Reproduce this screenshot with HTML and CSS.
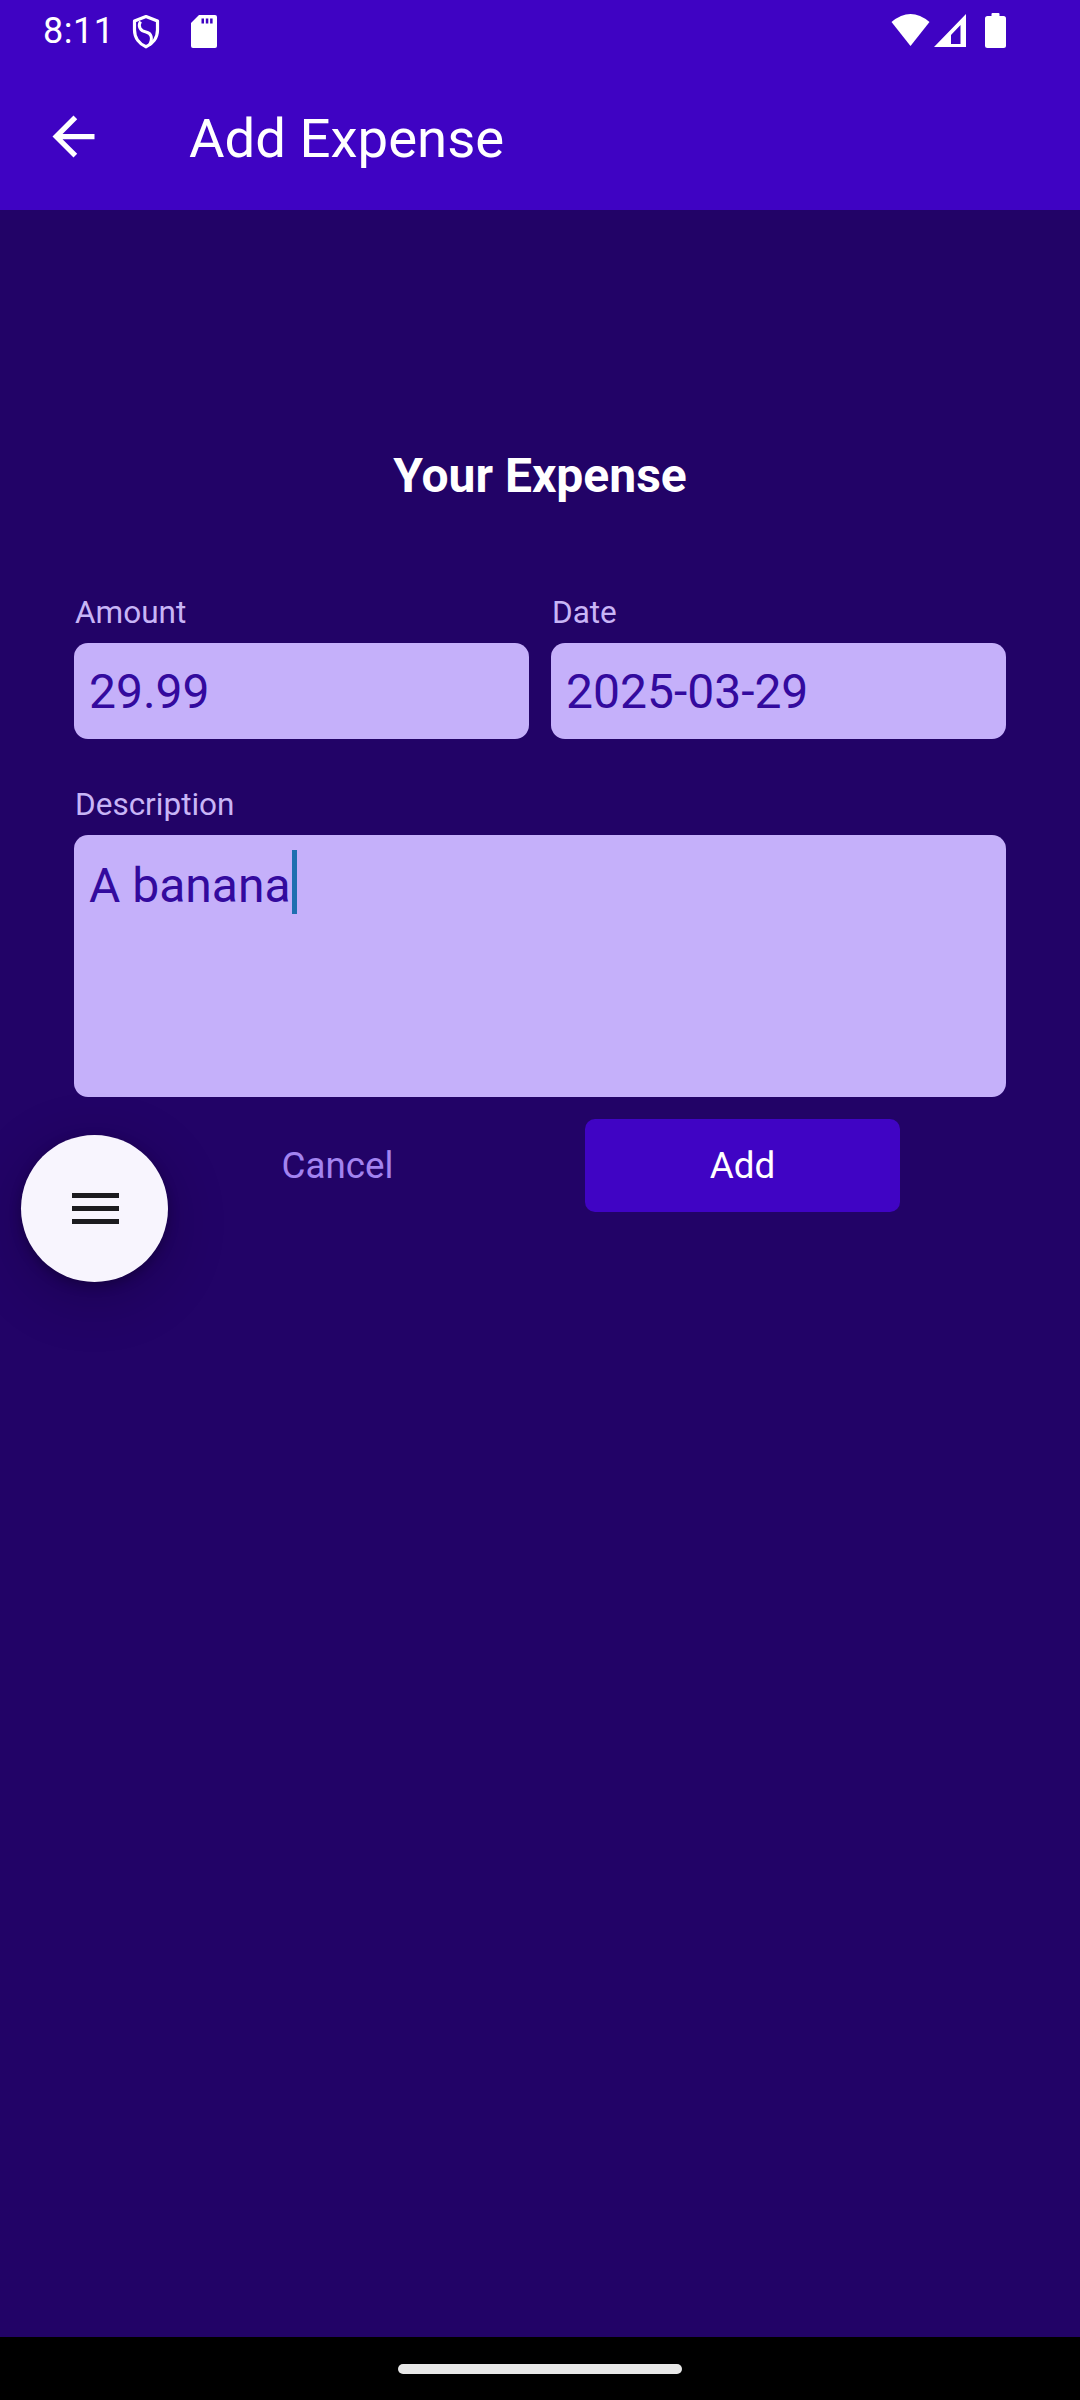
FILE: index.html
```html
<!DOCTYPE html>
<html lang="en">
<head>
<meta charset="utf-8">
<title>Add Expense</title>
<link rel="stylesheet" href="styles.css">
</head>
<body>
<div class="screen">
  <div class="statusbar">
    <div class="status-left">
      <span class="time">8:11</span>
      <svg class="ic-shield" width="30" height="63" viewBox="0 0 30 63">
        <path d="M15 16.5 L3.5 21 V30 C3.5 38 8.5 44 15 46.8 C21.5 44 26.5 38 26.5 30 V21 Z" fill="none" stroke="#fff" stroke-width="3.2" stroke-linejoin="round"/>
        <path d="M9.5 21.5 C6.5 26.5 9.5 31 15 32 C20.5 33 22 38.5 18.5 45" fill="none" stroke="#fff" stroke-width="3"/>
      </svg>
      <svg class="ic-sd" width="26" height="63" viewBox="0 0 26 63">
        <path d="M8 15 H24 Q26 15 26 17 V46 Q26 48 24 48 H2 Q0 48 0 46 V23 Z" fill="#fff"/>
        <rect x="10.5" y="18.5" width="2.5" height="5" fill="#3f03c3"/>
        <rect x="14.8" y="18.5" width="2.5" height="5" fill="#3f03c3"/>
        <rect x="19.1" y="18.5" width="2.5" height="5" fill="#3f03c3"/>
      </svg>
    </div>
    <div class="status-right">
      <svg class="ic-wifi" width="39" height="63" viewBox="0 0 39 63">
        <path d="M19.5 46 L0.5 22 Q19.5 6 38.5 22 Z" fill="#fff"/>
      </svg>
      <svg class="ic-signal" width="32" height="63" viewBox="0 0 32 63">
        <path fill-rule="evenodd" d="M32 14 V47 H0 Z M17 35 L26.5 25 V44 H17 Z" fill="#fff"/>
      </svg>
      <svg class="ic-battery" width="21" height="63" viewBox="0 0 21 63">
        <rect x="6.5" y="13" width="8" height="4" rx="1" fill="#fff"/>
        <rect x="0" y="16" width="21" height="32" rx="2.5" fill="#fff"/>
      </svg>
    </div>
  </div>

  <header class="appbar">
    <svg class="back" width="63" height="63" viewBox="0 0 24 24">
      <path d="M20 11H7.83l5.59-5.59L12 4l-8 8 8 8 1.41-1.41L7.83 13H20v-2z" fill="#fff"/>
    </svg>
    <h1 class="appbar-title">Add Expense</h1>
  </header>

  <main class="content">
    <h2 class="heading">Your Expense</h2>

    <div class="row">
      <div class="field-group">
        <div class="label">Amount</div>
        <div class="input">29.99</div>
      </div>
      <div class="field-group">
        <div class="label">Date</div>
        <div class="input">2025-03-29</div>
      </div>
    </div>

    <div class="field-group desc-group">
      <div class="label">Description</div>
      <div class="input textarea">A banana<span class="cursor"></span></div>
    </div>

    <div class="actions">
      <button class="btn btn-text">Cancel</button>
      <button class="btn btn-filled">Add</button>
    </div>
  </main>

  <button class="fab" aria-label="Menu">
    <svg width="147" height="147" viewBox="0 0 147 147">
      <rect x="51" y="58" width="47" height="5" fill="#1c1b1f"/>
      <rect x="51" y="71" width="47" height="5" fill="#1c1b1f"/>
      <rect x="51" y="84" width="47" height="5" fill="#1c1b1f"/>
    </svg>
  </button>

  <div class="navbar"><div class="pill"></div></div>
</div>
</body>
</html>
```

FILE: styles.css
```css
* { box-sizing: border-box; }

html, body {
  margin: 0;
  padding: 0;
}

body {
  background: #220367;
  font-family: Roboto, "Noto Sans", "Liberation Sans", sans-serif;
}

.screen {
  position: relative;
  width: 1080px;
  height: 2400px;
  display: flex;
  flex-direction: column;
  background: #220367;
  overflow: hidden;
}

/* status bar */
.statusbar {
  height: 63px;
  background: #3f03c3;
  display: flex;
  justify-content: space-between;
  align-items: flex-start;
  padding: 0 74px 0 43px;
}

.status-left, .status-right {
  display: flex;
  align-items: flex-start;
  height: 63px;
}

.time {
  color: #fff;
  font-size: 36px;
  line-height: 63px;
  letter-spacing: 0.5px;
}

.ic-shield { margin-left: 17px; }
.ic-sd { margin-left: 30px; }
.ic-signal { margin-left: 4px; }
.ic-battery { margin-left: 19px; }

/* app bar */
.appbar {
  height: 147px;
  background: #3f03c3;
  display: flex;
  align-items: center;
  padding-left: 42px;
}

.back {
  flex: none;
}

.appbar-title {
  margin: 4px 0 0 84px;
  color: #fff;
  font-weight: 400;
  font-size: 54.5px;
  line-height: 63px;
}

/* content */
.content {
  flex: 1;
  padding: 0 74px;
}

.heading {
  margin: 238px 0 0;
  text-align: center;
  color: #fff;
  font-weight: 700;
  font-size: 48px;
  line-height: 56px;
}

.row {
  margin-top: 89px;
  display: grid;
  grid-template-columns: 1fr 1fr;
  column-gap: 22px;
}

.field-group {
  display: flex;
  flex-direction: column;
  gap: 10px;
}

.label {
  color: #c8b5f6;
  font-size: 31.5px;
  line-height: 40px;
  padding-left: 1px;
}

.input {
  height: 96px;
  background: #c5b0fa;
  border-radius: 14px;
  color: #330a9e;
  font-size: 48px;
  line-height: 98px;
  padding-left: 15px;
  white-space: nowrap;
}

.desc-group {
  margin-top: 46px;
}

.textarea {
  height: 262px;
  line-height: 60px;
  padding-top: 15px;
}

.cursor {
  display: inline-block;
  width: 5px;
  height: 64px;
  background: #1f6fb0;
  vertical-align: -12px;
  margin-left: 1px;
}

.actions {
  margin-top: 22px;
  display: flex;
  justify-content: center;
  gap: 90px;
}

.btn {
  width: 315px;
  height: 93px;
  border: none;
  border-radius: 10px;
  font-family: Roboto, "Noto Sans", "Liberation Sans", sans-serif;
  font-size: 36.75px;
  font-weight: 400;
  padding: 0;
}

.btn-text {
  background: transparent;
  color: #a383f0;
}

.btn-filled {
  background: #4004c4;
  color: #fff;
}

/* floating menu button */
.fab {
  position: absolute;
  left: 21px;
  top: 1135px;
  width: 147px;
  height: 147px;
  border-radius: 50%;
  border: none;
  padding: 0;
  background: #f8f5fe;
  box-shadow: 0 14px 60px rgba(0, 0, 0, 0.22), 0 4px 12px rgba(0, 0, 0, 0.25);
}

.fab svg { display: block; }

/* navigation bar */
.navbar {
  height: 63px;
  background: #000;
  display: flex;
  justify-content: center;
  padding-top: 27px;
}

.pill {
  width: 284px;
  height: 10px;
  border-radius: 5px;
  background: #e8e8e8;
}
```
